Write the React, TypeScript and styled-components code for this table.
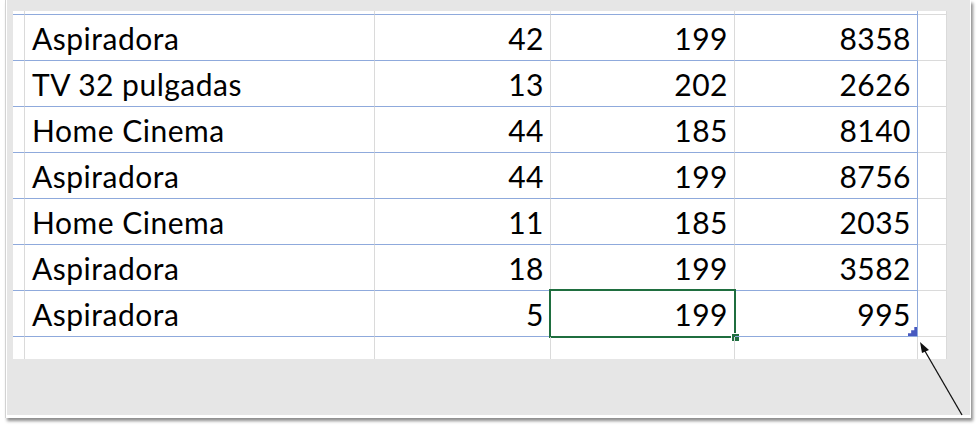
import React from 'react'
import styled, { createGlobalStyle } from 'styled-components'

const GlobalStyle = createGlobalStyle`
  html, body {
    margin: 0;
    padding: 0;
    background: #ffffff;
  }
  body {
    font-family: Lato, "Open Sans", sans-serif;
  }
`

const Page = styled.div`
  position: relative;
  width: 980px;
  height: 428px;
  overflow: hidden;
`

const Figure = styled.div`
  margin-left: 5px;
  width: 966px;
  height: 418px;
  box-sizing: border-box;
  background: #ffffff;
  border-left: 1px solid #d2d2d2;
  padding: 0 1px 3px 1px;
  box-shadow: 2px 3px 3px rgba(0, 0, 0, 0.45);
`

const Backdrop = styled.div`
  height: 100%;
  box-sizing: border-box;
  background: #e6e6e6;
  padding: 11px 0 0 6px;
`

const Sheet = styled.div`
  display: grid;
  width: 934px;
  grid-template-columns: 12px 350px 176px 184px 183px 29px;
  grid-template-rows: 4px repeat(7, 46px) 22px;
  background: #ffffff;
  font-family: Lato, "Open Sans", sans-serif;
  font-size: 30px;
  letter-spacing: 0.5px;
  color: #000000;
`

type Edge = 'table' | 'tableEnd' | 'outside'

const Cell = styled.div<{ $edge: Edge; $num?: boolean; $open?: boolean }>`
  position: relative;
  box-sizing: border-box;
  display: flex;
  align-items: center;
  justify-content: ${({ $num }) => ($num ? 'flex-end' : 'flex-start')};
  padding: ${({ $num }) => ($num ? '1px 6px 0 0' : '1px 0 0 7px')};
  line-height: 1;
  white-space: nowrap;
  border-right: 1px solid
    ${({ $edge }) => ($edge === 'tableEnd' ? '#8faadc' : '#dadada')};
  border-bottom: ${({ $edge, $open }) => {
    if ($open) return 'none'
    if ($edge === 'outside') return '1px solid #dadada'
    return '1px solid #8faadc'
  }};
`

const Selection = styled.div`
  position: absolute;
  top: -2px;
  left: -2px;
  right: -2px;
  bottom: -2px;
  border: 2px solid #1f6e3f;
  pointer-events: none;
`

const FillHandle = styled.div`
  position: absolute;
  right: -6px;
  bottom: -6px;
  width: 7px;
  height: 7px;
  background: #1f6e3f;
  border: 1px solid #ffffff;
`

const ResizeHandle = styled.div`
  position: absolute;
  right: 0;
  bottom: 0;
  width: 9px;
  height: 9px;
  background: #4759c0;
  clip-path: polygon(70% 0, 100% 0, 100% 100%, 0 100%, 0 70%, 35% 70%, 35% 35%, 70% 35%);
`

const Pointer = styled.svg`
  position: absolute;
  left: 910px;
  top: 330px;
  overflow: visible;
`

const rows: [string, number, number, number][] = [
  ['Aspiradora', 42, 199, 8358],
  ['TV 32 pulgadas', 13, 202, 2626],
  ['Home Cinema', 44, 185, 8140],
  ['Aspiradora', 44, 199, 8756],
  ['Home Cinema', 11, 185, 2035],
  ['Aspiradora', 18, 199, 3582],
  ['Aspiradora', 5, 199, 995],
]

function BlankRow({ open }: { open?: boolean }) {
  return (
    <>
      <Cell $edge={open ? 'outside' : 'table'} $open={open} />
      <Cell $edge={open ? 'outside' : 'table'} $open={open} />
      <Cell $edge={open ? 'outside' : 'table'} $open={open} />
      <Cell $edge={open ? 'outside' : 'table'} $open={open} />
      <Cell $edge={open ? 'outside' : 'tableEnd'} $open={open} />
      <Cell $edge="outside" $open={open} />
    </>
  )
}

export default function App() {
  return (
    <Page>
      <GlobalStyle />
      <Figure>
        <Backdrop>
          <Sheet>
            <BlankRow />
            {rows.map(([product, qty, price, total], i) => {
              const last = i === rows.length - 1
              return (
                <React.Fragment key={i}>
                  <Cell $edge="table" />
                  <Cell $edge="table">{product}</Cell>
                  <Cell $edge="table" $num>
                    {qty}
                  </Cell>
                  <Cell $edge="table" $num>
                    {price}
                    {last && (
                      <Selection>
                        <FillHandle />
                      </Selection>
                    )}
                  </Cell>
                  <Cell $edge="tableEnd" $num>
                    {total}
                    {last && <ResizeHandle />}
                  </Cell>
                  <Cell $edge="outside" />
                </React.Fragment>
              )
            })}
            <BlankRow open />
          </Sheet>
        </Backdrop>
      </Figure>
      <Pointer width="60" height="90" viewBox="0 0 60 90">
        <line x1="52" y1="85" x2="12" y2="16" stroke="#111" strokeWidth="1.3" />
        <polygon points="10,12 19,20 12,23" fill="#111" />
      </Pointer>
    </Page>
  )
}
